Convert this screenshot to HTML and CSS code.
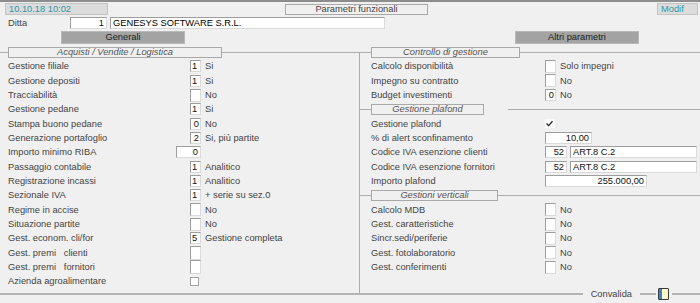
FILE: index.html
```html
<!DOCTYPE html>
<html lang="it">
<head>
    <meta charset="UTF-8">
    <meta name="viewport" content="width=device-width, initial-scale=1.0">
    <title>Parametri funzionali</title>
    <link rel="stylesheet" href="styles.css">
</head>
<body>

    <!-- Barra superiore -->
    <div class="topbar">
        <div class="stamp">10.10.18 10:02</div>
        <div class="title">Parametri funzionali</div>
        <div class="stamp mode">Modif</div>
    </div>

    <!-- Ditta -->
    <div class="line">
        <span class="caption">Ditta</span>
        <span class="box code right">1</span>
        <span class="box company">GENESYS SOFTWARE S.R.L.</span>
    </div>

    <!-- Schede -->
    <div class="line">
        <span class="tab first">Generali</span>
        <span class="tab second">Altri parametri</span>
    </div>

    <div class="frame">

        <!-- Colonna sinistra -->
        <fieldset class="group left-group">
            <legend><span class="legend-box w-acq">Acquisti / Vendite / Logistica</span></legend>
            <div class="row"><span class="label">Gestione filiale</span><span class="field"><span class="box small">1</span></span><span class="desc">Si</span></div>
            <div class="row"><span class="label">Gestione depositi</span><span class="field"><span class="box small">1</span></span><span class="desc">Si</span></div>
            <div class="row"><span class="label">Tracciabilità</span><span class="field"><span class="box blank"></span></span><span class="desc">No</span></div>
            <div class="row"><span class="label">Gestione pedane</span><span class="field"><span class="box small">1</span></span><span class="desc">Si</span></div>
            <div class="row"><span class="label">Stampa buono pedane</span><span class="field"><span class="box small right">0</span></span><span class="desc">No</span></div>
            <div class="row"><span class="label">Generazione portafoglio</span><span class="field"><span class="box small right">2</span></span><span class="desc">Si, più partite</span></div>
            <div class="row"><span class="label">Importo minimo RIBA</span><span class="field"><span class="box riba right">0</span></span></div>
            <div class="row"><span class="label">Passaggio contabile</span><span class="field"><span class="box small">1</span></span><span class="desc">Analitico</span></div>
            <div class="row"><span class="label">Registrazione incassi</span><span class="field"><span class="box small">1</span></span><span class="desc">Analitico</span></div>
            <div class="row"><span class="label">Sezionale IVA</span><span class="field"><span class="box small">1</span></span><span class="desc">+ serie su sez.0</span></div>
            <div class="row"><span class="label">Regime in accise</span><span class="field"><span class="box blank"></span></span><span class="desc">No</span></div>
            <div class="row"><span class="label">Situazione partite</span><span class="field"><span class="box blank"></span></span><span class="desc">No</span></div>
            <div class="row"><span class="label">Gest. econom. cli/for</span><span class="field"><span class="box small">5</span></span><span class="desc">Gestione completa</span></div>
            <div class="row"><span class="label">Gest. premi&nbsp;&nbsp; clienti</span><span class="field"><span class="box blank tall"></span></span></div>
            <div class="row"><span class="label">Gest. premi&nbsp;&nbsp; fornitori</span><span class="field"><span class="box blank tall"></span></span></div>
            <div class="row"><span class="label">Azienda agroalimentare</span><span class="field"><span class="check left-check"></span></span></div>
        </fieldset>

        <!-- Colonna destra -->
        <div class="right-col">
            <fieldset class="group">
                <legend><span class="legend-box w-ctrl">Controllo di gestione</span></legend>
                <div class="row"><span class="label">Calcolo disponibilità</span><span class="field"><span class="box blank"></span></span><span class="desc">Solo impegni</span></div>
                <div class="row"><span class="label">Impegno su contratto</span><span class="field"><span class="box blank"></span></span><span class="desc">No</span></div>
                <div class="row"><span class="label">Budget investimenti</span><span class="field"><span class="box small right">0</span></span><span class="desc">No</span></div>
            </fieldset>

            <fieldset class="group">
                <legend class="gap-legend"><span class="legend-box w-plaf">Gestione plafond</span></legend>
                <div class="row"><span class="label">Gestione plafond</span><span class="field">
                    <span class="check on">
                        <svg width="9" height="9" viewBox="0 0 9 9"><path d="M1.5 4.5 L3.6 6.6 L7.5 2.2" fill="none" stroke="#222" stroke-width="1.3"/></svg>
                    </span></span></div>
                <div class="row"><span class="label">% di alert sconfinamento</span><span class="field"><span class="box alert right">10,00</span></span></div>
                <div class="row"><span class="label">Codice IVA esenzione clienti</span><span class="field"><span class="box iva right">52</span><span class="box art">ART.8 C.2</span></span></div>
                <div class="row"><span class="label">Codice IVA esenzione fornitori</span><span class="field"><span class="box iva right">52</span><span class="box art">ART.8 C.2</span></span></div>
                <div class="row"><span class="label">Importo plafond</span><span class="field"><span class="box amount right">255.000,00</span></span></div>
            </fieldset>

            <fieldset class="group">
                <legend><span class="legend-box w-vert">Gestioni verticali</span></legend>
                <div class="row"><span class="label">Calcolo MDB</span><span class="field"><span class="box blank"></span></span><span class="desc">No</span></div>
                <div class="row"><span class="label">Gest. caratteristiche</span><span class="field"><span class="box blank"></span></span><span class="desc">No</span></div>
                <div class="row"><span class="label">Sincr.sedi/periferie</span><span class="field"><span class="box blank"></span></span><span class="desc">No</span></div>
                <div class="row"><span class="label">Gest. fotolaboratorio</span><span class="field"><span class="box blank"></span></span><span class="desc">No</span></div>
                <div class="row"><span class="label">Gest. conferimenti</span><span class="field"><span class="box blank"></span></span><span class="desc">No</span></div>
            </fieldset>
        </div>
    </div>

    <!-- Convalida: il testo copre la linea di fondo del riquadro -->
    <div class="footer">
        <span class="footer-text">Convalida</span>
        <span class="footer-gap"></span>
        <span class="icon-wrap"><span class="ok-icon"></span></span>
        <span class="footer-tail"></span>
    </div>

</body>
</html>
```

FILE: styles.css
```css
/* Pagina */
body {
    margin: 0;
    background-color: #f0f0f0;
    border-top: 2px solid #8d8d8d;
    font-family: "Liberation Sans", Arial, sans-serif;
    font-size: 9.3px;
    color: #444;
}

/* Righe superiori */
.topbar,
.line {
    display: flex;
    align-items: center;
    height: 14.33px;
}

.stamp {
    box-sizing: border-box;
    width: 103px;
    height: 12px;
    margin-left: 5px;
    padding-left: 3px;
    background-color: #dcdcdc;
    border: 1px solid #c4c4c4;
    color: #2f97a8;
    line-height: 10px;
}

.mode {
    width: 41px;
    margin-left: auto;
    margin-right: 2px;
}

.title {
    box-sizing: border-box;
    width: 143px;
    height: 11px;
    margin-left: 177px;
    border: 1px solid #a9a9a9;
    text-align: center;
    line-height: 9px;
    color: #444;
}

.caption {
    box-sizing: border-box;
    width: 70px;
    padding-left: 8px;
}

/* Campi */
.box {
    display: block;
    box-sizing: border-box;
    height: 12px;
    padding: 0 2px;
    background-color: #fff;
    border: 1px solid;
    border-color: #9d9d9d #dadada #dadada #9d9d9d;
    color: #111;
    line-height: 10px;
    white-space: nowrap;
    overflow: hidden;
}

.right {
    text-align: right;
}

.code {
    width: 37px;
}

.company {
    width: 275px;
    margin-left: 3px;
    color: #000;
}

.small {
    width: 11px;
    padding: 0 1px;
}

.blank {
    width: 11px;
    height: 13px;
}

.tall {
    height: 14px;
}

.riba {
    width: 25px;
}

.alert {
    width: 47px;
}

.iva {
    width: 22px;
}

.art {
    width: 127px;
    margin-left: 3px;
}

.amount {
    width: 102px;
}

.check {
    display: block;
    box-sizing: border-box;
    width: 9px;
    height: 9px;
    background-color: #fff;
    border: 1px solid #a4a4a4;
}

.left-check {
    margin-right: 2px;
}

.check.on {
    width: 10px;
    height: 9px;
    border: none;
    background-color: #fbfbfb;
}

.check svg {
    display: block;
}

/* Schede */
.tab {
    box-sizing: border-box;
    width: 124px;
    height: 13px;
    background-color: #a3a3a3;
    border: 1px solid #b9b9b9;
    color: #1c1c1c;
    text-align: center;
    line-height: 11px;
}

.first {
    margin-left: 61px;
}

.second {
    margin-left: 330px;
}

/* Riquadri */
.frame {
    display: flex;
    border-bottom: 2px solid #b4b4b4;
}

.group {
    margin: 0;
    padding: 0;
    min-width: 0;
    border: none;
    border-top: 1px solid #acacac;
}

.group legend {
    height: 14.33px;
    padding: 0;
    margin-left: 11px;
}

.left-group {
    box-sizing: border-box;
    width: 360px;
    flex: none;
    padding-bottom: 4px;
    border-right: 1px solid #acacac;
}

.left-group legend {
    margin-left: 8px;
}

.gap-legend {
    padding-right: 24px !important;
}

.legend-box {
    display: block;
    box-sizing: border-box;
    height: 11px;
    margin-top: 2px;
    background-color: #f0f0f0;
    border: 1px solid #a9a9a9;
    color: #555;
    font-style: italic;
    text-align: center;
    line-height: 9px;
}

.w-acq { width: 214px; }
.w-ctrl { width: 149px; }
.w-plaf { width: 113px; }
.w-vert { width: 127px; }

.right-col {
    flex: 1;
}

/* Righe dei parametri */
.row {
    display: flex;
    align-items: center;
    height: 14.33px;
    white-space: nowrap;
}

.label {
    box-sizing: border-box;
    flex: none;
}

.left-group .label {
    width: 176px;
    padding-left: 8px;
}

.left-group .field {
    display: flex;
    justify-content: flex-end;
    width: 25px;
}

.right-col .label {
    width: 185px;
    padding-left: 11px;
}

.right-col .field {
    display: flex;
    align-items: center;
}

.desc {
    margin-left: 4px;
}

/* Convalida */
.footer {
    display: flex;
    justify-content: flex-end;
    align-items: center;
    height: 12px;
    margin-top: -7px;
}

.footer-text {
    padding: 0 8px;
    background-color: #f0f0f0;
    color: #444;
    line-height: 12px;
}

.footer-gap {
    width: 16px;
}

.icon-wrap {
    display: flex;
    padding: 0 3px 0 2px;
    background-color: #f0f0f0;
}

.footer-tail {
    width: 28px;
}

.ok-icon {
    box-sizing: border-box;
    width: 11px;
    height: 12px;
    border: 1px solid #3a3a3a;
    border-radius: 1px;
    background: linear-gradient(to right, #3f7fd8 0 35%, #fff7c4 35%);
}
```
